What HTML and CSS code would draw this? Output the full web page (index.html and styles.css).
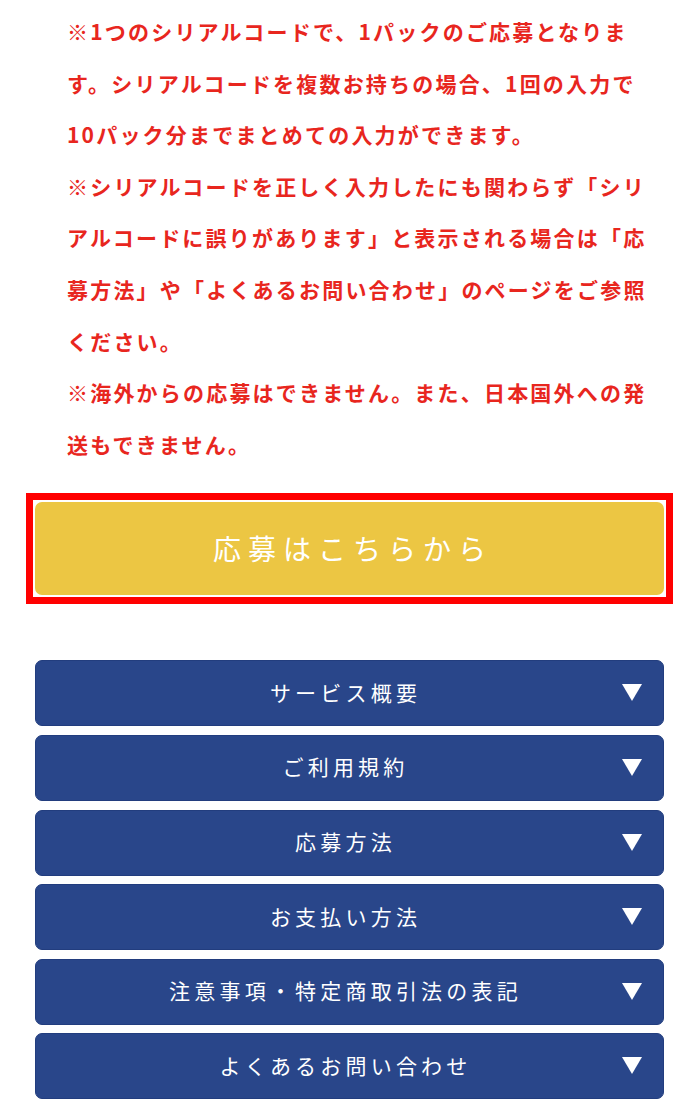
FILE: index.html
```html
<!DOCTYPE html>
<html lang="ja">
<head>
<meta charset="utf-8">
<title>応募</title>
<link rel="stylesheet" href="styles.css">
</head>
<body>
<div class="page">
  <div class="notes">
    <p class="note">※1つのシリアルコードで、1パックのご応募となります。シリアルコードを複数お持ちの場合、1回の入力で10パック分までまとめての入力ができます。</p>
    <p class="note">※シリアルコードを正しく入力したにも関わらず「シリアルコードに誤りがあります」と表示される場合は「応募方法」や「よくあるお問い合わせ」のページをご参照ください。</p>
    <p class="note">※海外からの応募はできません。また、日本国外への発送もできません。</p>
  </div>
  <div class="apply-frame">
    <a class="apply" href="#">応募はこちらから</a>
  </div>
  <ul class="menu">
    <li class="item"><span class="label">サービス概要</span><span class="arrow"></span></li>
    <li class="item"><span class="label">ご利用規約</span><span class="arrow"></span></li>
    <li class="item"><span class="label">応募方法</span><span class="arrow"></span></li>
    <li class="item"><span class="label">お支払い方法</span><span class="arrow"></span></li>
    <li class="item"><span class="label">注意事項・特定商取引法の表記</span><span class="arrow"></span></li>
    <li class="item"><span class="label">よくあるお問い合わせ</span><span class="arrow"></span></li>
  </ul>
</div>
</body>
</html>
```

FILE: styles.css
```css
* { box-sizing: border-box; }
html, body {
  margin: 0;
  padding: 0;
  background: #ffffff;
}
body {
  font-family: "Noto Sans CJK JP", "Noto Sans", sans-serif;
}
.page {
  width: 700px;
  padding: 6px 36px 20px 35px;
}
.notes {
  width: 582px;
  margin-left: 32px;
}
.note {
  margin: 0;
  color: #e8261e;
  font-size: 21px;
  font-weight: 700;
  letter-spacing: 2.2px;
  line-height: 51.6px;
}
.apply-frame {
  margin: 23px -9px 0;
  padding: 2px;
  border: 7px solid #ff0000;
}
.apply {
  display: flex;
  align-items: center;
  justify-content: center;
  height: 93px;
  padding-left: 7px;
  padding-bottom: 2px;
  background: #ecc643;
  border-radius: 7px;
  color: #ffffff;
  text-decoration: none;
  font-size: 28px;
  font-weight: 400;
  letter-spacing: 7px;
}
.menu {
  list-style: none;
  margin: 56px 0 0;
  padding: 0;
  display: flex;
  flex-direction: column;
  gap: 8.6px;
}
.item {
  position: relative;
  display: flex;
  align-items: center;
  justify-content: center;
  height: 66px;
  padding-right: 8px;
  padding-bottom: 3px;
  background: #29468a;
  border: 1px solid #223d7e;
  border-radius: 7px;
  color: #ffffff;
  font-size: 21px;
  letter-spacing: 4.2px;
}
.arrow {
  position: absolute;
  right: 21px;
  top: 50%;
  margin-top: -9px;
  width: 0;
  height: 0;
  border-left: 10px solid transparent;
  border-right: 10px solid transparent;
  border-top: 17px solid #ffffff;
}
```
